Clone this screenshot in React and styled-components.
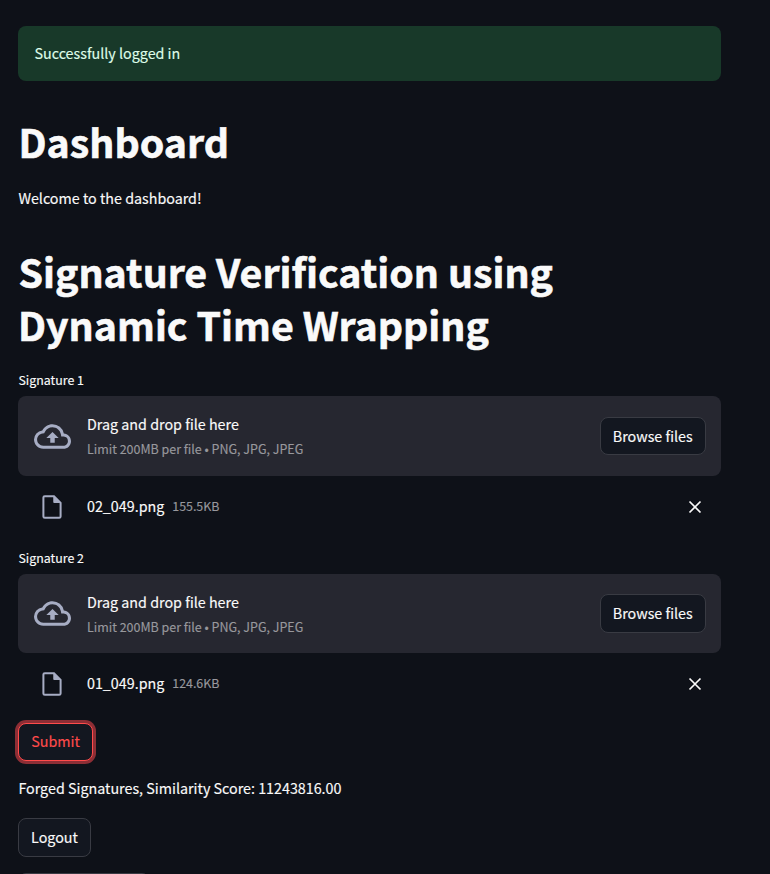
import React from "react";
import styled, { createGlobalStyle, css } from "styled-components";

const GlobalStyle = createGlobalStyle`
  * { box-sizing: border-box; }
  html, body { margin: 0; height: 100%; overflow: hidden; background: #0e1118; }
  body, button {
    font-family: "Source Sans Pro", "Noto Sans CJK JP", "Noto Sans", sans-serif;
    font-kerning: normal;
    -webkit-text-stroke: 0.15px currentColor;
  }
`;

const Page = styled.main`
  width: 703px;
  height: 874px;
  margin-left: 18px;
  padding-top: 25.5px;
  display: flex;
  flex-direction: column;
  align-items: stretch;
  color: #fafafa;
  font-size: 14.3px;
  line-height: 24px;
`;

const Alert = styled.div`
  height: 55.5px;
  flex: none;
  padding: 15.5px 16.5px;
  border-radius: 8px;
  background: #183929;
  color: #dffde9;
`;

const Title = styled.h1`
  margin: ${(p) => p.$top}px 0 0;
  font-size: 39.3px;
  font-weight: 700;
  line-height: 53px;
  text-indent: 0.5px;
  -webkit-text-stroke: 0.6px currentColor;
`;

const Paragraph = styled.p`
  margin: ${(p) => p.$top}px 0 0;
  height: 24px;
  text-indent: 0.4px;
`;

const Uploader = styled.section`
  margin-top: ${(p) => p.$top}px;
`;

const Label = styled.div`
  height: 28px;
  font-size: 12.4px;
  text-indent: 0.4px;
`;

const Dropzone = styled.div`
  height: 79.5px;
  padding: 0 15.5px 0 16px;
  display: flex;
  align-items: center;
  border-radius: 8px;
  background: #262730;
`;

const CloudIcon = styled.svg`
  width: 37px;
  height: 37px;
  margin: 1px 16px 0 0;
  fill: #a7adc4;
`;

const Instructions = styled.div`
  flex: 1;
  padding-top: 2.5px;
  display: flex;
  flex-direction: column;
`;

const Hint = styled.span`
  height: 26px;
  line-height: 25px;
  ${(p) => p.$small && css`
    font-size: 12.47px;
    color: #98989d;
  `}
`;

const Button = styled.button`
  width: ${(p) => p.$width}px;
  height: ${(p) => p.$height || 38.5}px;
  margin-top: ${(p) => p.$top || 0}px;
  padding: 0 0 1px;
  flex: none;
  border: 1px solid #393b43;
  border-radius: 8px;
  background: #131720;
  color: #fafafa;
  font-size: 14.3px;
  line-height: 24px;
  ${(p) => p.$focused && css`
    border-color: #ff4b4b;
    color: #ff4b4b;
    box-shadow: 0 0 0 3px #8d2e35;
  `}
`;

const FileRow = styled.div`
  height: 61.5px;
  padding: 0 17.7px 0 22px;
  display: flex;
  align-items: center;
`;

const FileIcon = styled.svg`
  width: 24px;
  height: 24px;
  margin: 1px 23px 0 0;
  fill: none;
  stroke: #a7adc4;
  stroke-width: 2;
`;

const FileName = styled.span`
  margin: 0 8px 2px 0;
`;

const FileSize = styled.span`
  flex: 1;
  margin-bottom: 1.5px;
  font-size: 12.4px;
  color: #98989d;
`;

const CloseIcon = styled.svg`
  width: 16px;
  height: 16px;
  margin-top: 0.5px;
  stroke: #fafafa;
  stroke-width: 1.7;
`;

function FileUploader({ top, label, name, size }) {
  return (
    <Uploader $top={top}>
      <Label>{label}</Label>
      <Dropzone>
        <CloudIcon viewBox="0 0 24 24">
          <path d="M19.35 10.04A7.49 7.49 0 0 0 12 4C9.11 4 6.6 5.64 5.35 8.04A5.994 5.994 0 0 0 0 14c0 3.31 2.69 6 6 6h13c2.76 0 5-2.24 5-5 0-2.64-2.05-4.78-4.65-4.96zM19 18H6c-2.21 0-4-1.79-4-4 0-2.05 1.53-3.76 3.56-3.97l1.07-.11.5-.95A5.469 5.469 0 0 1 12 6c2.62 0 4.88 1.86 5.39 4.43l.3 1.5 1.53.11A2.98 2.98 0 0 1 22 15c0 1.65-1.35 3-3 3zM8 13h2.55v3h2.9v-3H16l-4-4z" />
        </CloudIcon>
        <Instructions>
          <Hint>Drag and drop file here</Hint>
          <Hint $small>Limit 200MB per file • PNG, JPG, JPEG</Hint>
        </Instructions>
        <Button $width={105.5}>Browse files</Button>
      </Dropzone>
      <FileRow>
        <FileIcon viewBox="0 0 24 24">
          <path d="M14 1.2H4.8a1.4 1.4 0 0 0-1.4 1.4v18.8a1.4 1.4 0 0 0 1.4 1.4h14.4a1.4 1.4 0 0 0 1.4-1.4V7.8z" />
          <path d="M13.8 1.5v6h6z" fill="#a7adc4" strokeWidth="1" />
        </FileIcon>
        <FileName>{name}</FileName>
        <FileSize>{size}</FileSize>
        <CloseIcon viewBox="0 0 16 16">
          <path d="M2.5 2.5l11 11M13.5 2.5l-11 11" />
        </CloseIcon>
      </FileRow>
    </Uploader>
  );
}

const Actions = styled.div`
  display: flex;
  flex-direction: column;
  align-items: flex-start;
`;

export default function App() {
  return (
    <>
      <GlobalStyle />
      <Page>
        <Alert>Successfully logged in</Alert>
        <Title $top={33}>Dashboard</Title>
        <Paragraph $top={19}>Welcome to the dashboard!</Paragraph>
        <Title $top={34}>
          Signature Verification using
          <br />
          Dynamic Time Wrapping
        </Title>
        <FileUploader top={18.4} label="Signature 1" name="02_049.png" size="155.5KB" />
        <FileUploader top={8.2} label="Signature 2" name="01_049.png" size="124.6KB" />
        <Actions>
          <Button $width={75} $top={8} $height={38.5} $focused>
            Submit
          </Button>
          <Paragraph $top={15}>Forged Signatures, Similarity Score: 11243816.00</Paragraph>
          <Button $width={73} $top={18} $height={39}>Logout</Button>
          <Button $width={132} $top={16} aria-label="More" />
        </Actions>
      </Page>
    </>
  );
}
